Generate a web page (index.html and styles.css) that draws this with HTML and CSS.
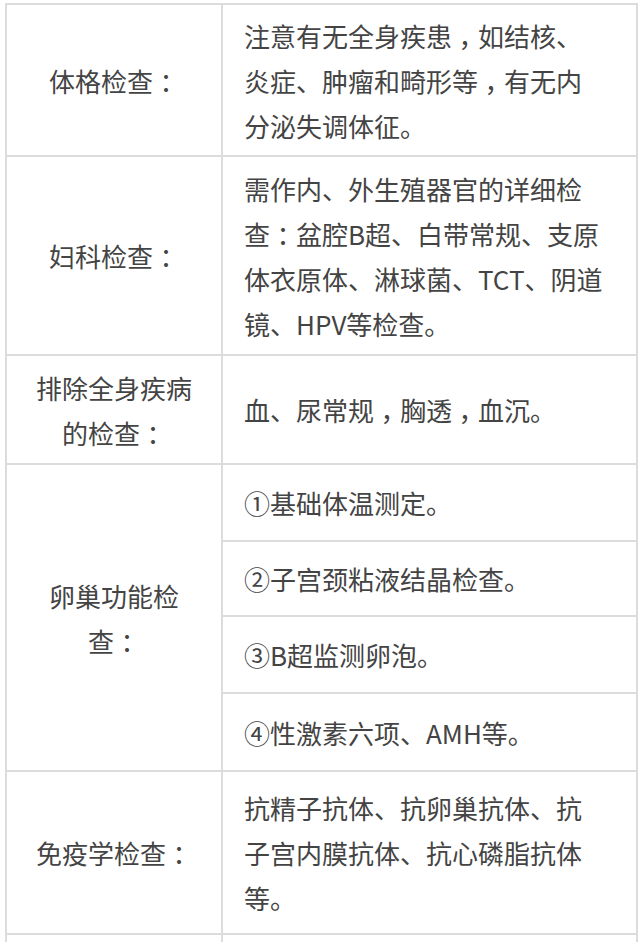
FILE: index.html
```html
<!DOCTYPE html>
<html lang="zh-CN">
<head>
<meta charset="utf-8">
<title>检查项目</title>
<link rel="stylesheet" href="styles.css">
</head>
<body>
<table class="exam">
  <colgroup><col class="c-left"><col class="c-right"></colgroup>
  <tr class="r1">
    <td class="label">体格检查<span class="punct">：</span></td>
    <td class="desc">注意有无全身疾患<span class="punct">，</span>如结核、<br>炎症、肿瘤和畸形等<span class="punct">，</span>有无内<br>分泌失调体征。</td>
  </tr>
  <tr class="r2">
    <td class="label">妇科检查<span class="punct">：</span></td>
    <td class="desc">需作内、外生殖器官的详细检<br>查<span class="punct">：</span>盆腔B超、白带常规、支原<br>体衣原体、淋球菌、TCT、阴道<br>镜、HPV等检查。</td>
  </tr>
  <tr class="r3">
    <td class="label">排除全身疾病<br>的检查<span class="punct">：</span></td>
    <td class="desc">血、尿常规<span class="punct">，</span>胸透<span class="punct">，</span>血沉。</td>
  </tr>
  <tr class="s1">
    <td class="label" rowspan="4">卵巢功能检<br>查<span class="punct">：</span></td>
    <td class="desc">①基础体温测定。</td>
  </tr>
  <tr class="s2">
    <td class="desc">②子宫颈粘液结晶检查。</td>
  </tr>
  <tr class="s3">
    <td class="desc">③B超监测卵泡。</td>
  </tr>
  <tr class="s4">
    <td class="desc">④性激素六项、AMH等。</td>
  </tr>
  <tr class="r5">
    <td class="label">免疫学检查<span class="punct">：</span></td>
    <td class="desc">抗精子抗体、抗卵巢抗体、抗<br>子宫内膜抗体、抗心磷脂抗体<br>等。</td>
  </tr>
  <tr class="r6">
    <td class="label"></td>
    <td class="desc"></td>
  </tr>
</table>
</body>
</html>
```

FILE: styles.css
```css
html, body {
  margin: 0;
  padding: 0;
  background: #ffffff;
}

body {
  font-family: "Noto Sans CJK SC", "Noto Sans", sans-serif;
  font-size: 26px;
  font-weight: 400;
  line-height: 45px;
  color: #444444;
}

.exam {
  border-collapse: collapse;
  table-layout: fixed;
  width: 631px;
  margin: 3px 0 0 5px;
}

.c-left { width: 216px; }
.c-right { width: 415px; }

.exam td {
  border: 2px solid #dcdcdc;
  vertical-align: middle;
  padding: 0;
  white-space: nowrap;
}

.label {
  text-align: center;
  padding: 0 10px;
}

.exam td.desc {
  text-align: left;
  padding: 0 10px 0 21px;
}

.punct {
  display: inline-block;
  width: 1em;
  text-align: center;
  font-feature-settings: "halt" 1;
}

.r1 { height: 152px; }
.r2 { height: 199px; }
.r3 { height: 109px; }
.s1 { height: 77px; }
.s2 { height: 75px; }
.s3 { height: 77px; }
.s4 { height: 78px; }
.r5 { height: 163px; }
.r6 { height: 40px; }
```
